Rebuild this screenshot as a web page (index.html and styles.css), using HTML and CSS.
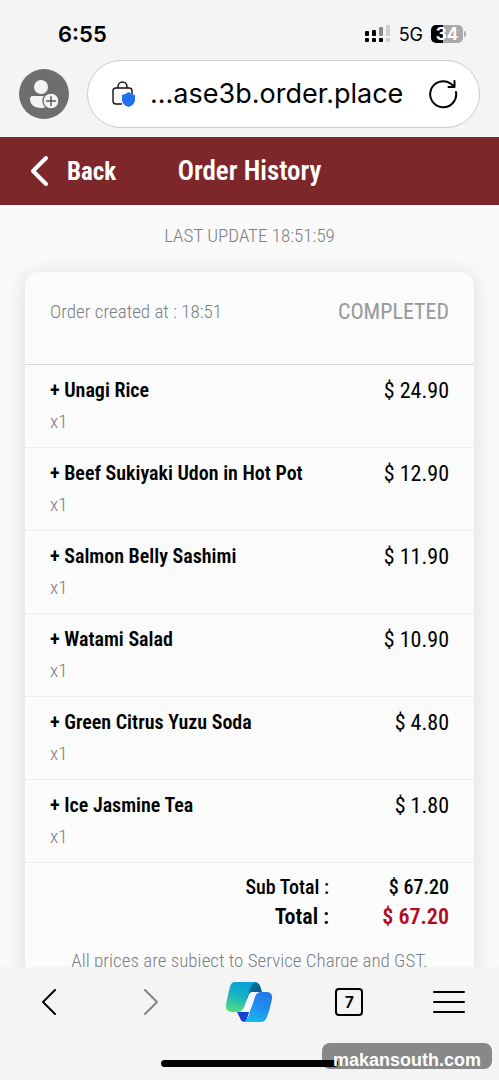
FILE: index.html
```html
<!DOCTYPE html>
<html lang="en">
<head>
<meta charset="utf-8">
<meta name="viewport" content="width=device-width, initial-scale=1">
<title>Order History</title>
<link rel="stylesheet" href="styles.css">
</head>
<body>
<div class="phone">
  <div class="browser-top">
    <div class="status">
      <span class="clock">6:55</span>
      <div class="status-right">
        <svg class="signal" width="26" height="18" viewBox="0 0 26 18" aria-hidden="true">
          <rect x="0" y="6" width="4" height="5" rx="1"/><rect x="7" y="5" width="4" height="6" rx="1"/>
          <rect x="14" y="2" width="4" height="9" rx="1" fill="#8c8c8c"/><rect x="21" y="0" width="4" height="11" rx="1" fill="#cfcfcf"/>
          <rect x="0" y="13" width="4" height="4" rx="1"/><rect x="7" y="13" width="4" height="4" rx="1"/><rect x="14" y="13" width="4" height="4" rx="1"/><rect x="21" y="13" width="4" height="4" rx="1" fill="#cfcfcf"/>
        </svg>
        <span class="network">5G</span>
        <span class="battery">34</span>
      </div>
    </div>
    <div class="address">
      <button class="avatar" aria-label="Profile">
        <svg width="50" height="50" viewBox="0 0 50 50">
          <circle cx="25" cy="25" r="25" fill="#6e6e6e"/>
          <circle cx="22" cy="18" r="7" fill="#f4f4f4"/>
          <path d="M14 27h16c3 0 4 2 3 5-1 5-6 7-11 7-7 0-11-4-11-9 0-2 1-3 3-3z" fill="#f4f4f4"/>
          <circle cx="32" cy="32" r="8" fill="#f4f4f4" stroke="#6e6e6e" stroke-width="1.4"/>
          <path d="M32 27.500v9M27.500 32h9" stroke="#555" stroke-width="1.400" stroke-linecap="round"/>
        </svg>
      </button>
      <div class="url-box">
        <svg class="lock" width="24" height="28" viewBox="0 0 24 28" aria-hidden="true">
          <path d="M10 24H4q-3 0-3-3V11q0-3 3-3h13q3 0 3 3v3M6 8V6.500a4.500 4.500 0 0 1 9 0V8" fill="none" stroke="#111" stroke-width="1.400"/>
          <path d="M16.500 12q3 2.500 6.500 3v5q0 4.500-6.500 7-6.500-2.500-6.500-7v-5q3.500-.5 6.500-3z" fill="#1f6fee"/>
        </svg>
        <span class="url">...ase3b.order.place</span>
        <button class="reload" aria-label="Reload">
          <svg width="30" height="30" viewBox="0 0 30 30" fill="none" stroke="#000" stroke-width="2" stroke-linecap="round" stroke-linejoin="round">
            <path d="M28 13A13 13 0 1 1 22.500 4.500L26 7.500M26.500 2v6H20.500"/>
          </svg>
        </button>
      </div>
    </div>
  </div>

  <header class="app-bar">
    <button class="back">
      <svg width="20" height="32" viewBox="0 0 20 32" fill="none" stroke="#fff" stroke-width="4" stroke-linecap="round" stroke-linejoin="round"><path d="M16 3L3 16l13 13"/></svg>
      Back
    </button>
    <h1>Order History</h1>
  </header>

  <main>
    <p class="updated">LAST UPDATE 18:51:59</p>
    <section class="card">
      <div class="card-head"><span class="created">Order created at : 18:51</span><span class="state">COMPLETED</span></div>
      <ul class="items">
        <li><div><h2>+ Unagi Rice</h2><p>x1</p></div><span class="price">$ 24.90</span></li>
        <li><div><h2>+ Beef Sukiyaki Udon in Hot Pot</h2><p>x1</p></div><span class="price">$ 12.90</span></li>
        <li><div><h2>+ Salmon Belly Sashimi</h2><p>x1</p></div><span class="price">$ 11.90</span></li>
        <li><div><h2>+ Watami Salad</h2><p>x1</p></div><span class="price">$ 10.90</span></li>
        <li><div><h2>+ Green Citrus Yuzu Soda</h2><p>x1</p></div><span class="price">$ 4.80</span></li>
        <li><div><h2>+ Ice Jasmine Tea</h2><p>x1</p></div><span class="price">$ 1.80</span></li>
      </ul>
      <dl class="totals">
        <dt>Sub Total :</dt><dd>$ 67.20</dd>
        <dt class="grand">Total :</dt><dd class="grand due">$ 67.20</dd>
      </dl>
      <p class="note">All prices are subject to Service Charge and GST.</p>
    </section>
  </main>

  <nav class="browser-bottom">
    <div class="tools">
      <button aria-label="Previous page"><svg width="16" height="28" viewBox="0 0 16 28" fill="none" stroke="#000" stroke-width="2" stroke-linecap="round" stroke-linejoin="round"><path d="M13 2L1 14l12 12"/></svg></button>
      <button aria-label="Next page"><svg width="16" height="28" viewBox="0 0 16 28" fill="none" stroke="#858585" stroke-width="2" stroke-linecap="round" stroke-linejoin="round"><path d="M3 2l12 12L3 26"/></svg></button>
      <button aria-label="Copilot">
        <svg width="48" height="42" viewBox="0 0 48 42">
          <defs>
            <linearGradient id="teal" x1="0.600" y1="0" x2="0.300" y2="1"><stop offset="0" stop-color="#079fd8"/><stop offset=".5" stop-color="#19b5c0"/><stop offset="1" stop-color="#55dc83"/></linearGradient>
            <linearGradient id="blue" x1="0.700" y1="0" x2="0.300" y2="1"><stop offset="0" stop-color="#2478ea"/><stop offset=".5" stop-color="#218df0"/><stop offset="1" stop-color="#16bdf2"/></linearGradient>
            <linearGradient id="navy" x1="0" y1="0" x2="1" y2="1"><stop offset="0" stop-color="#087bb2"/><stop offset="1" stop-color="#0b4b72"/></linearGradient>
          </defs>
          <path d="M24 1h5q5 0 6.500 5l1.500 5h-8q-4 0-5 4l-3 6z" fill="url(#navy)"/>
          <path d="M12 31h12l-3 10h-1q-4 0-5-4z" fill="#1840d4"/>
          <path d="M10 1h21q-4 1-6 7l-5 16q-2 7-7 7H7q-7 0-6-7Q3 13 5 6q1-5 5-5z" fill="url(#teal)"/>
          <path d="M32 11h9q7 0 6 7-2 10-5 18-2 5-6 5H18q4-1 6-7l4-15q2-8 4-8z" fill="url(#blue)"/>
          <path d="M28 11h7q-4 1-5 5l-3 9q-2 6-7 6h-6q4-1 6-7l3-8q1-5 5-5z" fill="#f8fbfc"/>
        </svg>
      </button>
      <button aria-label="Tabs"><span class="tabs">7</span></button>
      <button aria-label="Menu"><svg width="32" height="24" viewBox="0 0 32 24" stroke="#000" stroke-width="2" stroke-linecap="round"><path d="M1 2h30M1 12h30M1 22h30"/></svg></button>
    </div>
    <div class="home-bar"></div>
    <div class="watermark"><span>makansouth.com</span></div>
  </nav>
</div>
</body>
</html>
```
FILE: styles.css
```css
* { box-sizing: border-box; }
body, h1, h2, p, ul, dl, dd { margin: 0; padding: 0; }
body { background: #fafafa; color: #000; font-family: "Roboto Condensed", "Liberation Sans Narrow", Roboto, sans-serif; }
button { display: flex; align-items: center; justify-content: center; border: 0; padding: 0; background: none; color: inherit; font: inherit; }
svg { display: block; flex: none; }
.phone { display: flex; flex-direction: column; height: 100vh; overflow: hidden; }
.browser-top { flex: none; background: #f4f4f4; padding: 20px 19px 9px; font-family: Inter, sans-serif; }
.status { display: flex; justify-content: space-between; align-items: center; height: 28px; padding: 0 17px 0 39px; }
.clock { font-size: 22px; font-weight: 600; }
.status-right { display: flex; align-items: center; gap: 8px; }
.network { font-size: 18px; }
.battery { position: relative; width: 32px; height: 18px; border-radius: 5px; background: linear-gradient(90deg, #000 36%, #aaa 36%); color: #fff; font-size: 17px; font-weight: 700; line-height: 18px; text-align: center; }
.battery::after { content: ""; position: absolute; left: 33px; top: 6px; width: 2px; height: 6px; border-radius: 0 2px 2px 0; background: #aaa; }
.address { display: flex; align-items: center; gap: 18px; margin-top: 12px; }
.url-box { flex: 1; display: flex; align-items: center; height: 68px; padding: 0 21px 0 24px; border: 1px solid #ccc; border-radius: 34px; background: #fff; }
.url { flex: 1; padding-left: 14px; font-size: 27px; line-height: 32px; white-space: nowrap; }
.app-bar { flex: none; display: flex; align-items: center; justify-content: center; position: relative; height: 68px; background: #7d272b; color: #fff; }
.back { position: absolute; left: 30px; top: 0; height: 100%; gap: 17px; font-size: 25px; font-weight: 700; }
.app-bar h1 { font-size: 27px; line-height: 32px; font-weight: 600; }
main { flex: 1; min-height: 0; overflow: hidden; padding: 19px 25px 0; }
.updated { color: #7c7d82; font-size: 19px; line-height: 24px; font-weight: 300; text-align: center; }
.card { margin-top: 24px; border-radius: 14px; background: #fbfbfb; box-shadow: 0 2px 22px rgba(0, 0, 0, .13); }
.card-head { display: flex; justify-content: space-between; height: 93px; padding: 24px 25px 0; border-bottom: 1px solid #d5d5d7; line-height: 32px; }
.created { color: #7c7d82; font-size: 19px; font-weight: 300; }
.state { color: #97989d; font-size: 22px; }
.items { list-style: none; }
.items li { display: flex; justify-content: space-between; height: 83px; padding: 13px 25px 0; border-bottom: 1px solid #ededed; }
.items h2 { font-size: 20px; line-height: 24px; font-weight: 600; }
.items p { margin-top: 8px; color: #7c7d82; font-size: 19px; font-weight: 300; line-height: 24px; }
.price { font-size: 22px; line-height: 26px; }
.totals { display: grid; grid-template-columns: 1fr 120px; padding: 9px 25px 0; font-size: 20px; line-height: 30px; font-weight: 500; text-align: right; }
.grand { font-size: 22px; font-weight: 600; }
.due { color: #b00b20; }
.note { padding: 17px 25px 24px; color: #7c7d82; font-size: 19px; font-weight: 300; line-height: 24px; text-align: center; white-space: nowrap; }
.browser-bottom { flex: none; position: relative; height: 113px; background: #f4f4f4; font-family: Inter, sans-serif; }
.tools { display: grid; grid-template-columns: repeat(5, 1fr); height: 70px; }
.tabs { width: 28px; height: 28px; border: 2px solid #000; border-radius: 4px; font-size: 16px; line-height: 24px; font-weight: 600; }
.home-bar { position: relative; z-index: 1; width: 177px; height: 7px; margin: 23px auto 0; border-radius: 4px; background: #000; }
.watermark { position: absolute; right: 7px; bottom: 11px; padding: 0 11px; height: 26px; border-radius: 8px; background: #888; color: #fff; font: 700 18px/34px "Liberation Sans", sans-serif; }
.watermark span { position: relative; z-index: 2; }
```
